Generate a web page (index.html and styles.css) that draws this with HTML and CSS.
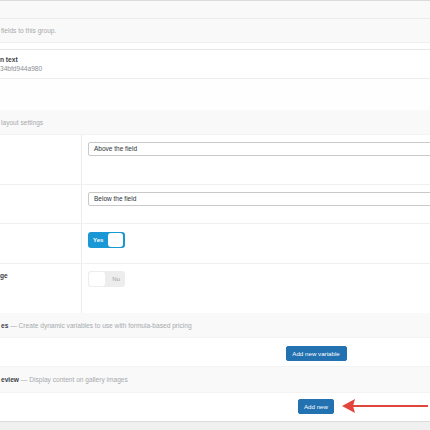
FILE: index.html
```html
<!DOCTYPE html>
<html>
<head>
<meta charset="utf-8">
<link rel="stylesheet" href="styles.css">
</head>
<body>
<div class="page">
  <div class="topbar"></div>
  <div class="desc">fields to this group.</div>
  <div class="gap"></div>
  <div class="field-row">
    <div class="field-label">n text</div>
    <div class="field-id">34bfd944a980</div>
  </div>
  <div class="empty-row"></div>
  <div class="section-head"><span class="muted">layout settings</span></div>
  <div class="settings">
    <div class="set-row r1">
      <div class="set-label"></div>
      <div class="set-value"><div class="select">Above the field</div></div>
    </div>
    <div class="set-row r2">
      <div class="set-label"></div>
      <div class="set-value"><div class="select">Below the field</div></div>
    </div>
    <div class="set-row r3">
      <div class="set-label"></div>
      <div class="set-value">
        <div class="toggle on"><span class="toggle-text">Yes</span><span class="knob"></span></div>
      </div>
    </div>
    <div class="set-row r4">
      <div class="set-label"><span class="strong">ge</span></div>
      <div class="set-value">
        <div class="toggle off"><span class="knob"></span><span class="toggle-text">No</span></div>
      </div>
    </div>
  </div>
  <div class="section-head sh2"><span class="strong">es</span><span class="muted">&nbsp;— Create dynamic variables to use with formula-based pricing</span></div>
  <div class="btn-row br1"><button class="btn btn-wide">Add new variable</button></div>
  <div class="section-head sh3"><span class="strong">eview</span><span class="muted">&nbsp;— Display content on gallery images</span></div>
  <div class="btn-row br2"><button class="btn btn-narrow">Add new</button></div>
  <div class="footer"></div>
  <svg class="arrow" width="90" height="16" viewBox="0 0 90 16">
    <line x1="12" y1="8" x2="88" y2="8" stroke="#e2453c" stroke-width="2"/>
    <polygon points="2,8 15,1 13,8 15,15" fill="#e2453c"/>
  </svg>
</div>
</body>
</html>
```

FILE: styles.css
```css
html, body {
  margin: 0;
  padding: 0;
  background: #ffffff;
  overflow: hidden;
}
body {
  font-family: "Liberation Sans", Arial, sans-serif;
  font-size: 6.6px;
  color: #3c434a;
  width: 430px;
  height: 430px;
}
.page {
  position: relative;
  width: 430px;
  height: 430px;
  overflow: hidden;
}
.topbar {
  height: 17px;
  background: #f9f9f9;
  border-top: 1px solid #dcdcde;
  border-bottom: 1px solid #ececec;
}
.desc {
  height: 23px;
  background: #f9f9f9;
  color: #a7aaad;
  display: flex;
  align-items: center;
  padding-left: 1px;
  border-bottom: 1px solid #f0f0f0;
}
.gap {
  height: 6px;
  background: #ffffff;
  border-bottom: 1px solid #e6e6e6;
}
.field-row {
  height: 23px;
  padding-top: 5px;
  border-bottom: 1px solid #ececec;
  line-height: 9px;
}
.field-label {
  font-weight: bold;
  color: #3c434a;
}
.field-id {
  color: #8c8f94;
}
.empty-row {
  height: 31px;
  background: #fefefe;
}
.section-head {
  height: 24px;
  background: #f9f9f9;
  display: flex;
  align-items: center;
  padding-left: 1px;
  border-bottom: 1px solid #f3f3f3;
}
.sh2 { height: 24px; }
.sh3 { height: 25px; }
.muted { color: #a7aaad; }
.strong { font-weight: bold; color: #3c434a; }
.settings {
  display: flex;
  flex-direction: column;
}
.set-row {
  display: grid;
  grid-template-columns: 82px 1fr;
  border-bottom: 1px solid #f0f0f0;
}
.r1 { height: 49px; }
.r2 { height: 38px; }
.r3 { height: 39px; }
.r4 { height: 49px; border-bottom: none; }
.set-label {
  border-right: 1px solid #ececec;
  padding-top: 8px;
  line-height: 8px;
}
.set-value {
  padding-left: 6px;
  padding-top: 7px;
}
.r3 .set-value { padding-top: 8px; }
.select {
  width: 360px;
  height: 12px;
  border: 1px solid #c9c9c9;
  border-radius: 2px;
  background: #ffffff;
  color: #2c3338;
  padding-left: 5px;
  line-height: 12px;
  font-size: 6.5px;
}
.toggle {
  width: 37px;
  height: 16px;
  border-radius: 3px;
  display: flex;
  align-items: center;
  box-sizing: border-box;
  font-size: 6px;
}
.toggle.on {
  background: #1a97d5;
  padding: 0 2px 0 5px;
  justify-content: space-between;
}
.toggle.on .toggle-text {
  color: #ffffff;
  font-weight: bold;
}
.toggle.off {
  background: #ededed;
  padding: 0 5px 0 1px;
  justify-content: space-between;
}
.toggle.off .toggle-text {
  color: #a0a0a0;
}
.knob {
  width: 15px;
  height: 14px;
  background: #ffffff;
  border-radius: 3px;
}
.toggle.off .knob {
  width: 16px;
}
.btn-row {
  display: flex;
  justify-content: center;
  padding-left: 202px;
  box-sizing: border-box;
  border-bottom: 1px solid #f3f3f3;
}
.br1 {
  height: 29px;
  padding-top: 8px;
  align-items: flex-start;
}
.br2 {
  height: 28px;
  padding-top: 6px;
  align-items: flex-start;
  border-bottom: none;
}
.btn {
  height: 15px;
  background: #2271b1;
  border: 1px solid #2271b1;
  border-radius: 2px;
  color: #ffffff;
  font-family: "Liberation Sans", Arial, sans-serif;
  font-size: 6.2px;
  padding: 0;
  text-align: center;
  box-sizing: border-box;
}
.btn-wide { width: 61px; }
.btn-narrow { width: 36px; }
.footer {
  height: 8px;
  background: #f0f0f1;
  border-top: 1px solid #dcdcde;
}
.arrow {
  position: absolute;
  left: 340px;
  top: 398px;
}
```
